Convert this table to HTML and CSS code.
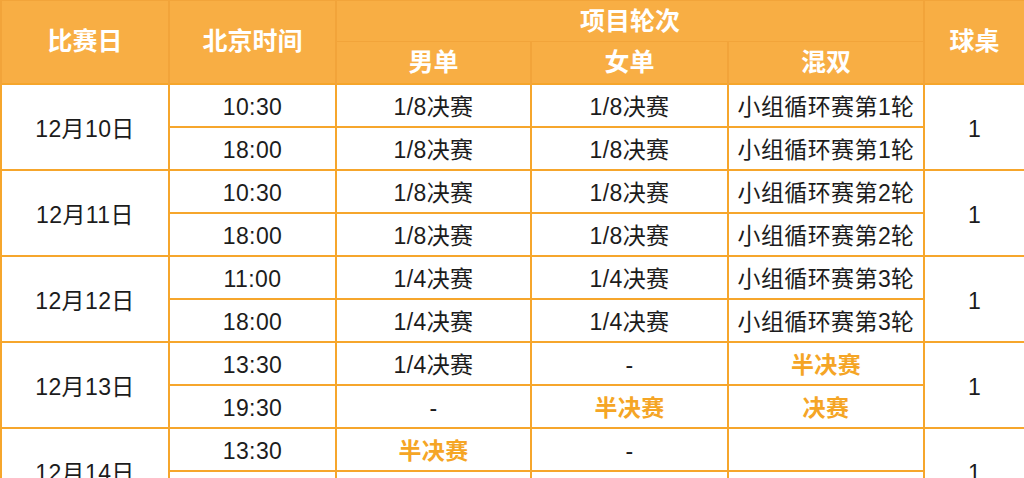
FILE: index.html
```html
<!DOCTYPE html>
<html lang="zh-CN">
<head>
<meta charset="utf-8">
<title>赛程</title>
<link rel="stylesheet" href="styles.css">
</head>
<body>
<table class="schedule">
  <colgroup>
    <col class="c-date"><col class="c-time"><col class="c-ev1"><col class="c-ev2"><col class="c-ev3"><col class="c-table">
  </colgroup>
  <thead>
    <tr class="h1">
      <th rowspan="2">比赛日</th>
      <th rowspan="2">北京时间</th>
      <th colspan="3">项目轮次</th>
      <th rowspan="2">球桌</th>
    </tr>
    <tr class="h2">
      <th>男单</th>
      <th>女单</th>
      <th>混双</th>
    </tr>
  </thead>
  <tbody>
    <tr><td rowspan="2">12月10日</td><td>10:30</td><td>1/8决赛</td><td>1/8决赛</td><td>小组循环赛第1轮</td><td rowspan="2">1</td></tr>
    <tr><td>18:00</td><td>1/8决赛</td><td>1/8决赛</td><td>小组循环赛第1轮</td></tr>
    <tr><td rowspan="2">12月11日</td><td>10:30</td><td>1/8决赛</td><td>1/8决赛</td><td>小组循环赛第2轮</td><td rowspan="2">1</td></tr>
    <tr><td>18:00</td><td>1/8决赛</td><td>1/8决赛</td><td>小组循环赛第2轮</td></tr>
    <tr><td rowspan="2">12月12日</td><td>11:00</td><td>1/4决赛</td><td>1/4决赛</td><td>小组循环赛第3轮</td><td rowspan="2">1</td></tr>
    <tr><td>18:00</td><td>1/4决赛</td><td>1/4决赛</td><td>小组循环赛第3轮</td></tr>
    <tr><td rowspan="2">12月13日</td><td>13:30</td><td>1/4决赛</td><td>-</td><td class="hl">半决赛</td><td rowspan="2">1</td></tr>
    <tr><td>19:30</td><td>-</td><td class="hl">半决赛</td><td class="hl">决赛</td></tr>
    <tr><td rowspan="2">12月14日</td><td>13:30</td><td class="hl">半决赛</td><td>-</td><td></td><td rowspan="2">1</td></tr>
    <tr><td>19:30</td><td>-</td><td class="hl">决赛</td><td></td></tr>
  </tbody>
</table>
</body>
</html>
```
FILE: styles.css
```css
html, body {
  margin: 0;
  padding: 0;
  background: #ffffff;
  overflow: hidden;
}
.schedule {
  width: 1024px;
  table-layout: fixed;
  border-collapse: collapse;
  font-family: "Liberation Sans", "Noto Sans CJK SC", sans-serif;
}
.c-date { width: 168px; }
.c-time { width: 167px; }
.c-ev1 { width: 195px; }
.c-ev2 { width: 197px; }
.c-ev3 { width: 196px; }
.c-table { width: 101px; }
.schedule th,
.schedule td {
  border: 2px solid #f6a62c;
  text-align: center;
  vertical-align: middle;
  padding: 0;
  line-height: 1;
}
.schedule th {
  background: #f8ae44;
  color: #ffffff;
  font-size: 25px;
  font-weight: bold;
  border-color: #f2a43a;
  border-width: 1px 2px;
}
.h1 { height: 41px; }
.h2 { height: 42px; }
.schedule tbody tr { height: 43px; }
.schedule td {
  font-size: 23px;
  color: #1c1c1c;
  padding-top: 5px;
  letter-spacing: 0.4px;
}
.schedule td.hl {
  color: #f5a525;
  font-weight: bold;
}
```
